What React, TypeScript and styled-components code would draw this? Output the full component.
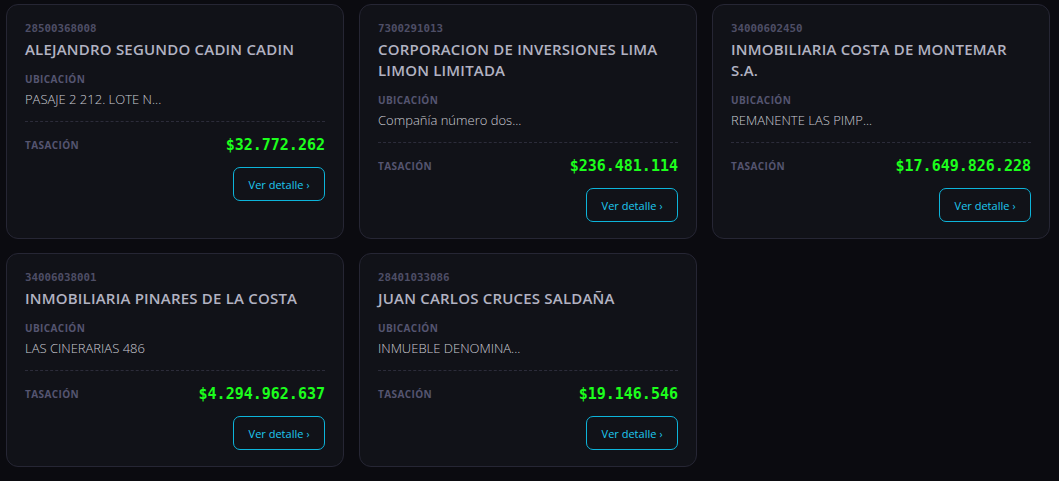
import styled, { createGlobalStyle } from "styled-components";

const GlobalStyle = createGlobalStyle`
  html, body {
    margin: 0;
    padding: 0;
    background: #0b0b10;
  }
  body {
    font-family: "Open Sans", "Liberation Sans", sans-serif;
  }
`;

const Grid = styled.div`
  display: grid;
  grid-template-columns: repeat(3, 338px);
  gap: 14px 15px;
  padding: 4px 6px;
`;

const Card = styled.div`
  display: flex;
  flex-direction: column;
  box-sizing: border-box;
  padding: 17px 18px 16px;
  background: #111218;
  border: 1px solid #262634;
  border-radius: 12px;
`;

const Rol = styled.div`
  font-family: "DejaVu Sans Mono", monospace;
  font-size: 10.8px;
  font-weight: bold;
  line-height: 14px;
  color: #4e4e66;
`;

const Name = styled.h3`
  margin: 3px 0 0;
  font-size: 15px;
  font-weight: 600;
  line-height: 21px;
  letter-spacing: 0.2px;
  color: #b2b2c2;
`;

const Label = styled.div`
  margin-top: 12px;
  font-size: 10px;
  font-weight: 700;
  line-height: 14px;
  letter-spacing: 0.4px;
  color: #555570;
`;

const Address = styled.div`
  margin-top: 5px;
  font-size: 13px;
  font-weight: 300;
  line-height: 17px;
  color: #cacad2;
`;

const Divider = styled.hr`
  margin: 13px 0 0;
  border: 0;
  border-top: 1px dashed #2c2c3a;
`;

const PriceRow = styled.div`
  display: flex;
  align-items: center;
  justify-content: space-between;
  margin-top: 14px;

  ${Label} {
    margin-top: 0;
  }
`;

const Price = styled.span`
  font-family: "DejaVu Sans Mono", monospace;
  font-size: 15px;
  font-weight: bold;
  color: #1cff1c;
`;

const Actions = styled.div`
  display: flex;
  justify-content: flex-end;
  margin-top: 13px;
`;

const DetailButton = styled.button`
  width: 92px;
  height: 34px;
  padding: 0;
  background: transparent;
  border: 1.5px solid #0db4da;
  border-radius: 7px;
  color: #1ec8f0;
  font-family: "Open Sans", "Liberation Sans", sans-serif;
  font-size: 11px;
  font-weight: 400;
  cursor: pointer;

  span {
    margin-left: 3px;
    font-size: 10px;
  }
`;

type Property = {
  rol: string;
  name: string;
  address: string;
  price: string;
};

const properties: Property[] = [
  { rol: "28500368008", name: "ALEJANDRO SEGUNDO CADIN CADIN", address: "PASAJE 2 212. LOTE N...", price: "$32.772.262" },
  { rol: "7300291013", name: "CORPORACION DE INVERSIONES LIMA LIMON LIMITADA", address: "Compañía número dos...", price: "$236.481.114" },
  { rol: "34000602450", name: "INMOBILIARIA COSTA DE MONTEMAR S.A.", address: "REMANENTE LAS PIMP...", price: "$17.649.826.228" },
  { rol: "34006038001", name: "INMOBILIARIA PINARES DE LA COSTA", address: "LAS CINERARIAS 486", price: "$4.294.962.637" },
  { rol: "28401033086", name: "JUAN CARLOS CRUCES SALDAÑA", address: "INMUEBLE DENOMINA...", price: "$19.146.546" },
];

function App() {
  return (
    <>
      <GlobalStyle />
      <Grid>
        {properties.map((p) => (
          <Card key={p.rol}>
            <Rol>{p.rol}</Rol>
            <Name>{p.name}</Name>
            <Label>UBICACIÓN</Label>
            <Address>{p.address}</Address>
            <Divider />
            <PriceRow>
              <Label>TASACIÓN</Label>
              <Price>{p.price}</Price>
            </PriceRow>
            <Actions>
              <DetailButton>
                Ver detalle<span>›</span>
              </DetailButton>
            </Actions>
          </Card>
        ))}
      </Grid>
    </>
  );
}

export default App;
